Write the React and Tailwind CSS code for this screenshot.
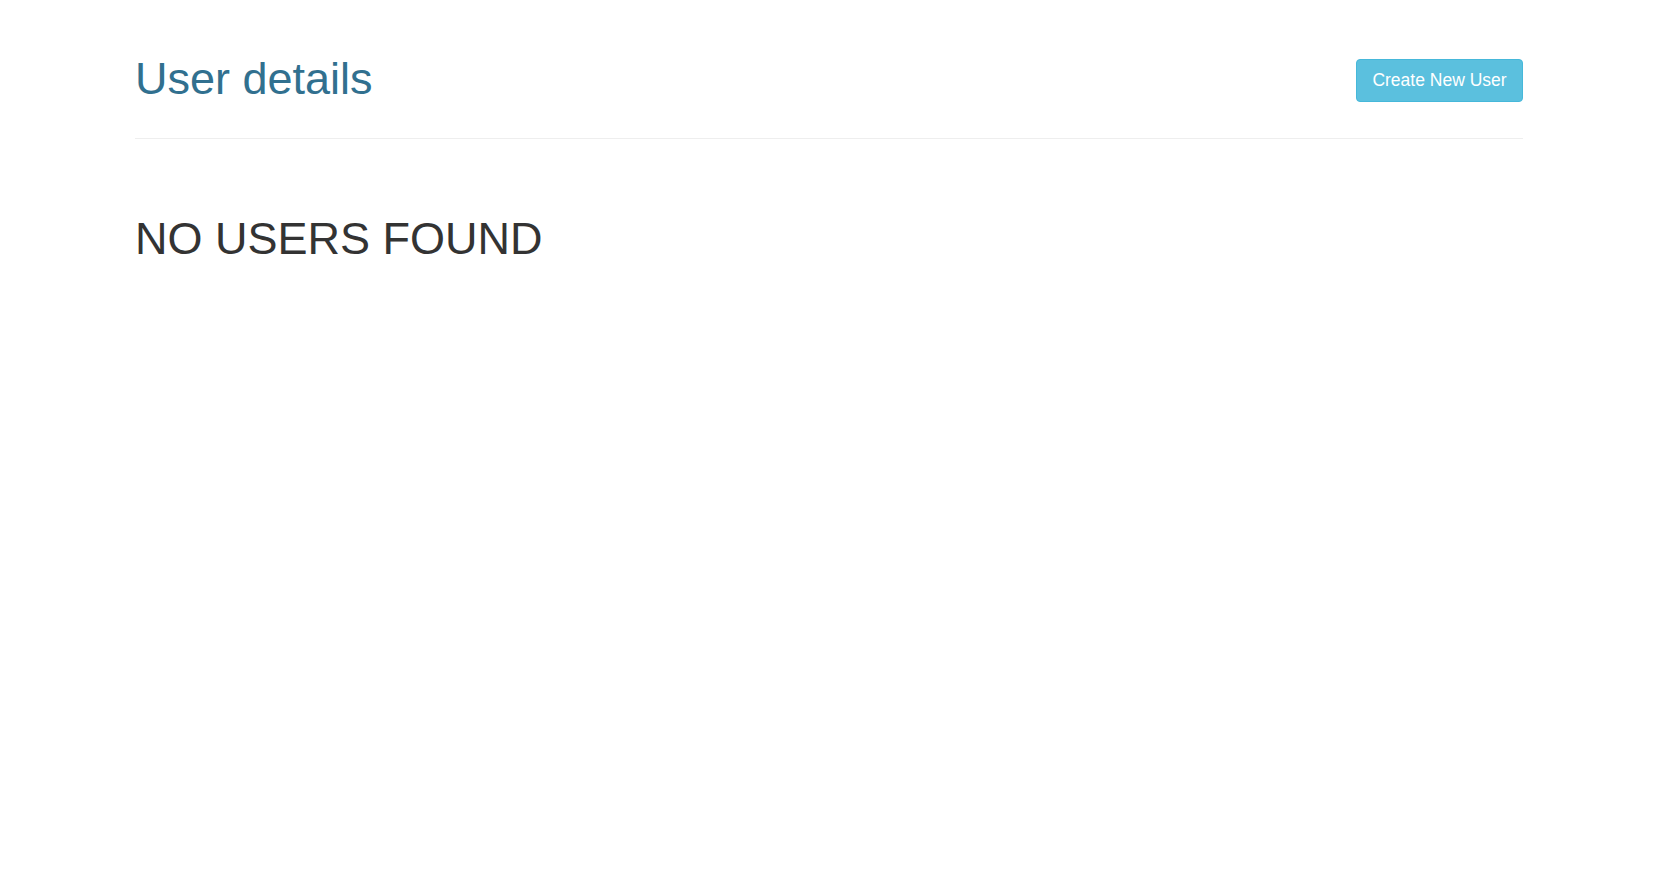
export default function App() {
  return (
    <div className="min-h-screen bg-white" style={{ fontFamily: '"Liberation Sans", Arial, sans-serif' }}>
      <div className="ml-[135px] w-[1388px] pt-[55px]">
        <div className="flex items-start justify-between border-b border-[#eeeeee] pb-[35px]">
          <h1 className="text-[45px] leading-[48px] text-[#31708f]">User details</h1>
          <button className="mt-[4px] h-[43px] w-[167px] rounded-[4px] border border-[#46b8da] bg-[#5bc0de] pb-[2px] text-center text-[17.5px] leading-[20px] text-white">
            Create New User
          </button>
        </div>
        <h2 className="mt-[76px] text-[45px] leading-[48px] text-[#333333]">NO USERS FOUND</h2>
      </div>
    </div>
  );
}
